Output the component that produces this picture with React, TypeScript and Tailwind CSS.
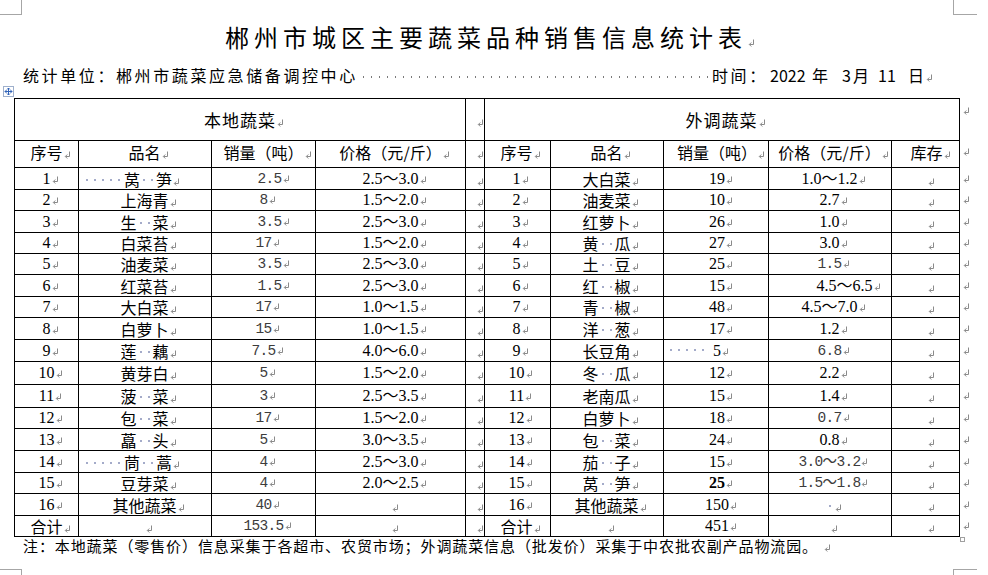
import React from "react";

const CJK16 = "font-['Noto_Sans_CJK_SC',sans-serif] text-[16px] text-black";
const SERIF = "font-['Liberation_Serif','Noto_Sans_CJK_SC',serif] text-[16px] text-black";
const SERIF_B = "font-['Liberation_Serif','Noto_Sans_CJK_SC',serif] text-[16px] font-bold text-black";
const MONO = "font-['Liberation_Mono','Noto_Sans_CJK_SC',monospace] text-[14.5px] tracking-[-0.7px] text-[#3c3c3c]";
const ROWS =
  "grid-rows-[41px_26px_21px_20px_21px_20px_20px_21px_20px_21px_21px_22px_22px_20px_21px_21px_20px_21px_20px]";
const COLPAD = [
  "pl-[8px]",
  "pl-[7px]",
  "pl-[8px]",
  "pl-[8px]",
  "pl-[10px]",
  "pl-[6px]",
  "pl-[7px]",
  "pl-[10px]",
  "pl-[7px]",
  "pl-[10px]",
];

type C = { t: string; k: "c" | "s" | "m" | "b" | "e"; pre?: string; lead?: "n" | "v" };
const c = (t: string): C => ({ t, k: "c" });
const s = (t: string): C => ({ t, k: "s" });
const m = (t: string, pre?: string): C => ({ t, k: "m", pre });
const e: C = { t: "", k: "e" };

function PM({ className = "" }: { className?: string }) {
  return (
    <svg
      width="7"
      height="8"
      viewBox="0 0 7 8"
      className={"inline-block align-baseline ml-[1px] " + className}
    >
      <path d="M5.5 0.5 V5.5 H1.5" fill="none" stroke="#8a8a8a" strokeWidth="1" />
      <path d="M3.3 3.5 L1.3 5.5 L3.3 7.5" fill="none" stroke="#8a8a8a" strokeWidth="1" />
    </svg>
  );
}

function Sp() {
  return (
    <span className="inline-block w-[8px] h-[7px] align-baseline">
      <span className="block mx-auto w-[2px] h-[2px] bg-[#a4abc9]" />
    </span>
  );
}

function Dots5() {
  return (
    <>
      <Sp />
      <Sp />
      <Sp />
      <Sp />
      <Sp />
    </>
  );
}

function Content({ cell }: { cell: C }) {
  const font =
    cell.k === "s" ? SERIF : cell.k === "b" ? SERIF_B : cell.k === "m" ? MONO : CJK16;
  return (
    <span className={"inline-block h-[20px] whitespace-pre leading-[20px] " + font}>
      {cell.pre ? <span className={"inline-block " + cell.pre} /> : null}
      {cell.lead === "n" ? (
        <span className="inline-block w-[40px] -ml-[34px] mr-[1px]">
          <Dots5 />
        </span>
      ) : null}
      {cell.lead === "v" ? (
        <span className="inline-block w-[40px] -ml-[46px] mr-[6px]">
          <Dots5 />
        </span>
      ) : null}
      {cell.t.split("").map((ch, i) =>
        ch === " " ? <Sp key={i} /> : <React.Fragment key={i}>{ch}</React.Fragment>
      )}
      <PM />
    </span>
  );
}

const SPACER: C = e;

const LEFT: C[][] = [
  [s("1"), { t: "莴  笋", k: "c", lead: "n" }, m("2.5", "w-[12px]"), s("2.5～3.0")],
  [s("2"), c("上海青"), m("8"), s("1.5～2.0")],
  [s("3"), c("生  菜"), m("3.5", "w-[12px]"), s("2.5～3.0")],
  [s("4"), c("白菜苔"), m("17"), s("1.5～2.0")],
  [s("5"), c("油麦菜"), m("3.5", "w-[12px]"), s("2.5～3.0")],
  [s("6"), c("红菜苔"), m("1.5", "w-[12px]"), s("2.5～3.0")],
  [s("7"), c("大白菜"), m("17"), s("1.0～1.5")],
  [s("8"), c("白萝卜"), m("15"), s("1.0～1.5")],
  [s("9"), c("莲  藕"), m("7.5"), s("4.0～6.0")],
  [s("10"), c("黄芽白"), m("5"), s("1.5～2.0")],
  [s("11"), c("菠  菜"), m("3"), s("2.5～3.5")],
  [s("12"), c("包  菜"), m("17"), s("1.5～2.0")],
  [s("13"), c("藠  头"), m("5"), s("3.0～3.5")],
  [s("14"), { t: "茼  蒿", k: "c", lead: "n" }, m("4"), s("2.5～3.0")],
  [s("15"), c("豆芽菜"), m("4"), s("2.0～2.5")],
  [s("16"), c("其他蔬菜"), m("40"), e],
  [c("合计"), e, m("153.5"), e],
];

const RIGHT: C[][] = [
  [s("1"), c("大白菜"), s("19"), s("1.0～1.2"), e],
  [s("2"), c("油麦菜"), s("10"), s("2.7"), e],
  [s("3"), c("红萝卜"), s("26"), s("1.0"), e],
  [s("4"), c("黄  瓜"), s("27"), s("3.0"), e],
  [s("5"), c("土  豆"), s("25"), m("1.5"), e],
  [s("6"), c("红  椒"), s("15"), { t: "4.5～6.5", k: "s", pre: "w-[30px]" }, e],
  [s("7"), c("青  椒"), s("48"), s("4.5～7.0"), e],
  [s("8"), c("洋  葱"), s("17"), s("1.2"), e],
  [s("9"), c("长豆角"), { t: "5", k: "s", lead: "v" }, m("6.8"), e],
  [s("10"), c("冬  瓜"), s("12"), s("2.2"), e],
  [s("11"), c("老南瓜"), s("15"), s("1.4"), e],
  [s("12"), c("白萝卜"), s("18"), m("0.7"), e],
  [s("13"), c("包  菜"), s("24"), s("0.8"), e],
  [s("14"), c("茄  子"), s("15"), m("3.0～3.2"), e],
  [s("15"), c("莴  笋"), { t: "25", k: "b" }, m("1.5～1.8"), e],
  [s("16"), c("其他蔬菜"), s("150"), c(" "), e],
  [c("合计"), e, s("451"), e, e],
];

const HEAD: C[] = [
  c("序号"),
  c("品名"),
  c("销量（吨）"),
  c("价格（元/斤）"),
  e,
  c("序号"),
  c("品名"),
  c("销量（吨）"),
  c("价格（元/斤）"),
  c("库存"),
];

export default function App() {
  const bodyRows = LEFT.map((l, i) => [...l, SPACER, ...RIGHT[i]]);
  return (
    <div className="relative w-[988px] h-[575px] overflow-hidden bg-white text-black font-['Noto_Sans_CJK_SC',sans-serif]">
      {/* page corner marks */}
      <div className="absolute left-0 top-0 w-[22px] h-[15px] border-r border-b border-[#a6a6a6]" />
      <div className="absolute left-[953px] top-0 w-[24px] h-[15px] border-l border-b border-[#a6a6a6]" />
      <div className="absolute left-0 top-[569px] w-[22px] h-[6px] border-r border-t border-[#a6a6a6]" />
      <div className="absolute left-[953px] top-[569px] w-[24px] h-[6px] border-l border-t border-[#a6a6a6]" />

      {/* table move handle */}
      <svg className="absolute left-[3px] top-[86px]" width="11" height="11" viewBox="0 0 11 11">
        <rect x="0.5" y="0.5" width="10" height="10" fill="white" stroke="#9fb0cc" />
        <path d="M5.5 2 V9 M2 5.5 H9" stroke="#2f62b8" strokeWidth="1" fill="none" />
        <path
          d="M4 3.5 L5.5 2 L7 3.5 M4 7.5 L5.5 9 L7 7.5 M3.5 4 L2 5.5 L3.5 7 M7.5 4 L9 5.5 L7.5 7"
          stroke="#2f62b8"
          strokeWidth="1"
          fill="none"
        />
      </svg>
      {/* table resize handle */}
      <div className="absolute left-[960px] top-[537px] w-[5px] h-[5px] border border-[#a0a0a0] bg-white" />

      {/* title */}
      <div className="pt-[22px] h-[53px] pr-[8px] text-center text-[24px] leading-[30px]">
        <span className="tracking-[5px]">郴州市城区主要蔬菜品种销售信息统计表</span>
        <PM className="-ml-[4px]" />
      </div>

      {/* subtitle */}
      <div className="mt-[11px] h-[22px] flex items-center pl-[23px] text-[16px] leading-[22px]">
        <span className="w-[337px] shrink-0 tracking-[2.6px] whitespace-nowrap">
          统计单位：郴州市蔬菜应急储备调控中心
        </span>
        <span className="w-[352px] h-[2px] shrink-0 translate-y-[2px] bg-[repeating-linear-gradient(90deg,transparent_0px,transparent_3px,#7a7a7a_3px,#7a7a7a_4.5px,transparent_4.5px,transparent_8px)]" />
        <span className="w-[58px] shrink-0 tracking-[2.6px] whitespace-nowrap">时间：</span>
        <span className="w-[42px] shrink-0">2022</span>
        <span className="w-[30px] shrink-0">年</span>
        <span className="w-[11px] shrink-0">3</span>
        <span className="w-[25px] shrink-0">月</span>
        <span className="w-[30px] shrink-0">11</span>
        <span className="shrink-0 whitespace-nowrap">
          日<PM className="ml-[2px]" />
        </span>
      </div>

      {/* table */}
      <div className="mt-[12px] ml-[14px] flex">
        <div
          className={
            "grid grid-cols-[63px_132px_103px_149px_18px_65px_112px_104px_122px_67px] gap-px bg-black p-px " +
            ROWS
          }
        >
          <div className="col-span-4 bg-white flex items-center justify-center pl-[8px]">
            <span className="text-[17px] tracking-[1px] leading-[20px]">
              本地蔬菜
              <PM />
            </span>
          </div>
          <div className="bg-white flex items-center justify-center pl-[10px]">
            <span className="text-[16px] leading-[20px]">
              <PM />
            </span>
          </div>
          <div className="col-span-5 bg-white flex items-center justify-center pl-[7px]">
            <span className="text-[17px] tracking-[1px] leading-[20px]">
              外调蔬菜
              <PM />
            </span>
          </div>

          {HEAD.map((cell, j) => (
            <div
              key={"h" + j}
              className={"bg-white flex items-center justify-center pb-[4px] " + COLPAD[j]}
            >
              <Content cell={cell} />
            </div>
          ))}

          {bodyRows.map((row, i) =>
            row.map((cell, j) => (
              <div
                key={i + "-" + j}
                className={"bg-white flex items-center justify-center " + COLPAD[j]}
              >
                <Content cell={cell} />
              </div>
            ))
          )}
        </div>

        {/* end-of-row marks */}
        <div className={"grid gap-px py-px pl-[2px] " + ROWS}>
          <div className="flex items-start pt-[8px]">
            <PM className="ml-0" />
          </div>
          <div className="flex items-center pb-[4px]">
            <PM className="ml-0" />
          </div>
          {bodyRows.map((_, i) => (
            <div key={"m" + i} className="flex items-center">
              <PM className="ml-0" />
            </div>
          ))}
        </div>
      </div>

      {/* note */}
      <div className="pl-[23px] text-[15px] leading-[17px] tracking-[0.9px] whitespace-nowrap">
        注：本地蔬菜（零售价）信息采集于各超市、农贸市场；外调蔬菜信息（批发价）采集于中农批农副产品物流园。
        <PM className="ml-[6px]" />
      </div>
    </div>
  );
}
